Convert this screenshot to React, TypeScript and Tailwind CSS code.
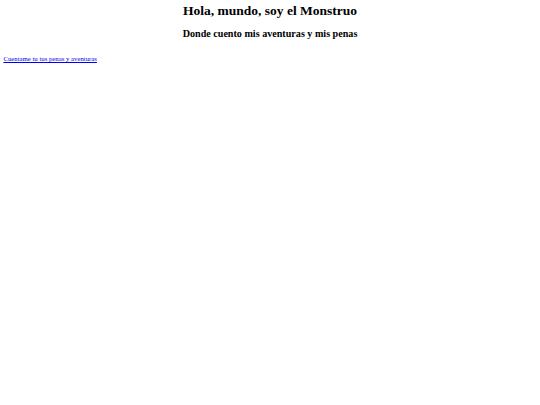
export default function App() {
  return (
    <div className="min-h-[405px] bg-white px-[3.4px] pt-[3.4px] font-['Liberation_Serif',serif] text-black">
      <h1 className="text-center text-[13.5px] font-bold leading-[15.5px]">Hola, mundo, soy el Monstruo</h1>
      <h2 className="mt-[9px] text-center text-[10.125px] font-bold leading-[11.6px]">
        Donde cuento mis aventuras y mis penas
      </h2>
      <p className="mt-[16px] text-[6.75px] leading-[7.8px]">
        <a href="#" className="text-[#0000ee] underline">
          Cuentame tu tus penas y aventuras
        </a>
      </p>
    </div>
  )
}
